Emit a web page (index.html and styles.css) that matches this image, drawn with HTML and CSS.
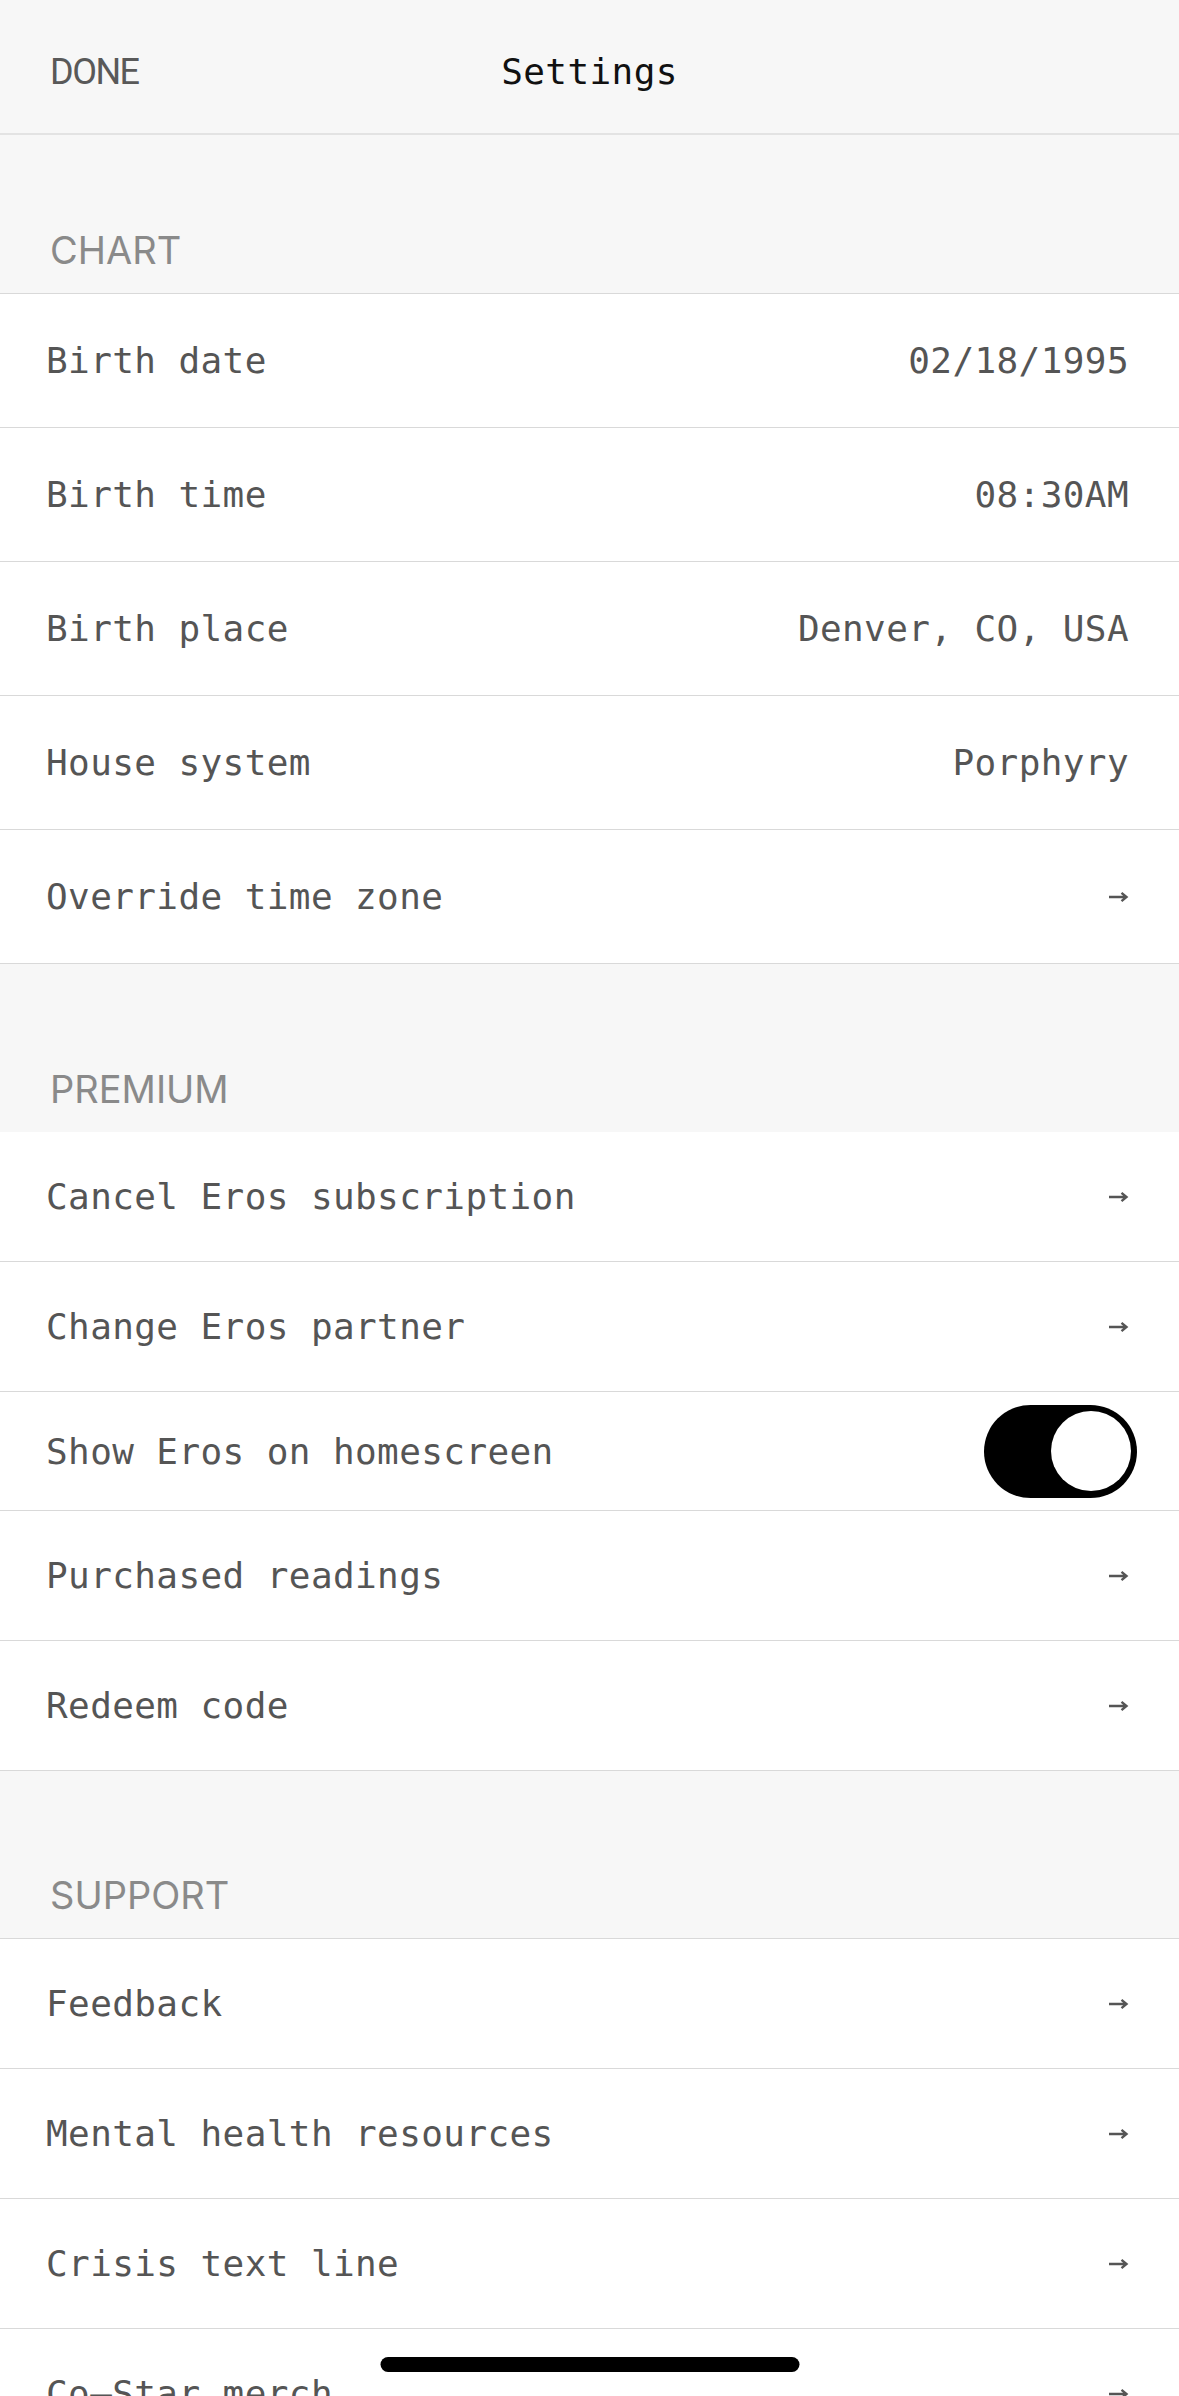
FILE: index.html
```html
<!DOCTYPE html>
<html lang="en">
<head>
    <meta charset="UTF-8">
    <meta name="viewport" content="width=device-width, initial-scale=1.0">
    <title>Settings</title>
    <link rel="stylesheet" href="styles.css">
</head>
<body>

    <!-- Top bar -->
    <header class="topbar">
        <span class="done">DONE</span>
        <h1 class="title">Settings</h1>
    </header>

    <!-- Chart -->
    <h2 class="group-title group-title--first">CHART</h2>
    <ul class="rows rows--chart rows--lined">
        <li class="row"><span>Birth date</span><span>02/18/1995</span></li>
        <li class="row"><span>Birth time</span><span>08:30AM</span></li>
        <li class="row"><span>Birth place</span><span>Denver, CO, USA</span></li>
        <li class="row"><span>House system</span><span>Porphyry</span></li>
        <li class="row"><span>Override time zone</span>
            <svg class="arrow" viewBox="0 0 20 12"><path d="M0 6H17M12.5 1.8L17.5 6L12.5 10.2"/></svg>
        </li>
    </ul>

    <!-- Premium -->
    <h2 class="group-title group-title--tall">PREMIUM</h2>
    <ul class="rows">
        <li class="row"><span>Cancel Eros subscription</span>
            <svg class="arrow" viewBox="0 0 20 12"><path d="M0 6H17M12.5 1.8L17.5 6L12.5 10.2"/></svg>
        </li>
        <li class="row"><span>Change Eros partner</span>
            <svg class="arrow" viewBox="0 0 20 12"><path d="M0 6H17M12.5 1.8L17.5 6L12.5 10.2"/></svg>
        </li>
        <li class="row row--toggle"><span>Show Eros on homescreen</span>
            <span class="toggle"><span class="knob"></span></span>
        </li>
        <li class="row"><span>Purchased readings</span>
            <svg class="arrow" viewBox="0 0 20 12"><path d="M0 6H17M12.5 1.8L17.5 6L12.5 10.2"/></svg>
        </li>
        <li class="row"><span>Redeem code</span>
            <svg class="arrow" viewBox="0 0 20 12"><path d="M0 6H17M12.5 1.8L17.5 6L12.5 10.2"/></svg>
        </li>
    </ul>

    <!-- Support -->
    <h2 class="group-title">SUPPORT</h2>
    <ul class="rows rows--lined">
        <li class="row"><span>Feedback</span>
            <svg class="arrow" viewBox="0 0 20 12"><path d="M0 6H17M12.5 1.8L17.5 6L12.5 10.2"/></svg>
        </li>
        <li class="row"><span>Mental health resources</span>
            <svg class="arrow" viewBox="0 0 20 12"><path d="M0 6H17M12.5 1.8L17.5 6L12.5 10.2"/></svg>
        </li>
        <li class="row"><span>Crisis text line</span>
            <svg class="arrow" viewBox="0 0 20 12"><path d="M0 6H17M12.5 1.8L17.5 6L12.5 10.2"/></svg>
        </li>
        <li class="row"><span>Co–Star merch</span>
            <svg class="arrow" viewBox="0 0 20 12"><path d="M0 6H17M12.5 1.8L17.5 6L12.5 10.2"/></svg>
        </li>
    </ul>

    <!-- iOS home indicator -->
    <div class="home-bar"></div>

</body>
</html>
```

FILE: styles.css
```css
/* Page */
html, body {
    margin: 0;
}

body {
    background: #f7f7f7;
    font-family: "DejaVu Sans Mono", monospace;
    height: 2396px;
    overflow: hidden; /* screen is cut at the bottom */
}

/* Top bar */
.topbar {
    height: 135px;
    box-sizing: border-box;
    padding: 10px 50px 0;
    border-bottom: 2px solid #e3e3e3;
    display: grid;
    grid-template-columns: 1fr auto 1fr;
    align-items: center;
}

.done {
    font-family: Roboto, sans-serif;
    font-size: 36px;
    letter-spacing: -1.5px;
    color: #595959;
}

.title {
    margin: 0;
    font-size: 36px;
    font-weight: normal;
    letter-spacing: 0.4px;
    color: #111;
}

/* Section labels */
.group-title {
    margin: 0;
    height: 167px;
    box-sizing: border-box;
    padding: 0 50px 20px;
    display: flex;
    align-items: flex-end;
    font-family: Inter, sans-serif;
    font-size: 38px;
    font-weight: 400;
    line-height: 46px;
    color: #8a8a8a;
}

.group-title--first {
    height: 158px;
}

.group-title--tall {
    height: 168px;
}

/* Rows */
.rows {
    list-style: none;
    margin: 0;
    padding: 0;
    background: #fff;
}

.rows--lined {
    border-top: 1px solid #d9d9d9;
}

.row {
    height: 130px;
    box-sizing: border-box;
    padding: 0 50px 0 46px;
    border-bottom: 1px solid #d9d9d9;
    display: flex;
    justify-content: space-between;
    align-items: center;
    font-size: 36px;
    letter-spacing: 0.4px;
    color: #555;
}

.rows--chart .row {
    height: 134px;
}

.row--toggle {
    height: 119px;
    padding-right: 42px;
}

.arrow {
    width: 20px;
    height: 12px;
    fill: none;
    stroke: #555;
    stroke-width: 2.4;
}

/* Switch */
.toggle {
    width: 153px;
    height: 93px;
    box-sizing: border-box;
    padding-right: 6px;
    border-radius: 47px;
    background: #000;
    display: flex;
    justify-content: flex-end;
    align-items: center;
}

.knob {
    width: 80px;
    height: 80px;
    border-radius: 50%;
    background: #fff;
}

/* Home indicator sits over the list */
.home-bar {
    position: fixed;
    left: 50%;
    bottom: 24px;
    width: 419px;
    height: 15px;
    transform: translateX(-50%);
    border-radius: 8px;
    background: #000;
}
```
